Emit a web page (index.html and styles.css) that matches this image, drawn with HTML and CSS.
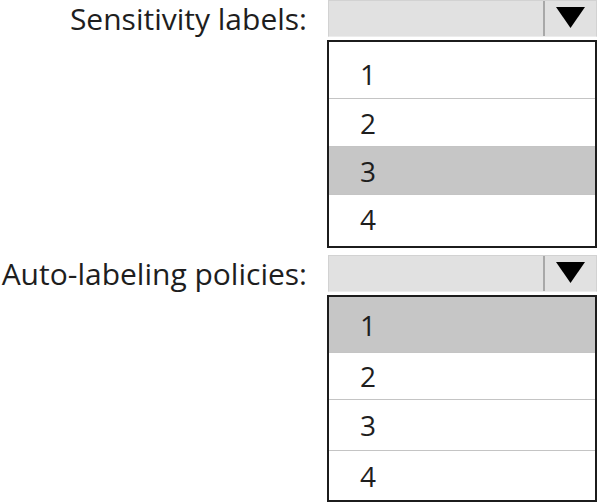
FILE: index.html
```html
<!DOCTYPE html>
<html lang="en">
<head>
  <meta charset="UTF-8">
  <title>Labels</title>
  <link rel="stylesheet" href="styles.css">
</head>
<body>

<div class="group group-a">
  <div class="label">Sensitivity labels:</div>
  <div class="combo">
    <span class="combo-value"></span>
    <span class="combo-btn"><svg width="29" height="21" viewBox="0 0 29 21"><polygon points="0,0 29,0 14.5,21" fill="#000"/></svg></span>
  </div>
  <div class="list">
    <div class="item">1</div>
    <div class="item">2</div>
    <div class="item selected">3</div>
    <div class="item">4</div>
  </div>
</div>

<div class="group group-b">
  <div class="label">Auto-labeling policies:</div>
  <div class="combo">
    <span class="combo-value"></span>
    <span class="combo-btn"><svg width="29" height="21" viewBox="0 0 29 21"><polygon points="0,0 29,0 14.5,21" fill="#000"/></svg></span>
  </div>
  <div class="list">
    <div class="item selected">1</div>
    <div class="item">2</div>
    <div class="item">3</div>
    <div class="item">4</div>
  </div>
</div>

</body>
</html>
```

FILE: styles.css
```css
html, body {
  margin: 0;
  padding: 0;
  background: #fff;
  font-family: 'Open Sans', 'Noto Sans', sans-serif;
  color: #1e1e1e;
}

.group {
  display: grid;
  grid-template-columns: 327px 270px;
  grid-template-rows: 37px auto;
  row-gap: 3px;
}

.group-b {
  margin-top: 7px;
}

.label {
  grid-column: 1;
  grid-row: 1;
  justify-self: end;
  padding-right: 20px;
  font-size: 30px;
  line-height: 37px;
  white-space: nowrap;
}

.combo {
  grid-column: 2;
  grid-row: 1;
  display: flex;
  height: 37px;
  box-sizing: border-box;
  margin-left: 1px;
  background: #e1e1e1;
  border: 1px solid #d2d2d2;
  border-bottom-color: #ececec;
}

.combo-value {
  flex: 1;
}

.combo-btn {
  width: 51px;
  display: flex;
  align-items: center;
  justify-content: center;
  border-left: 2px solid #a8a8a8;
  padding-bottom: 2px;
}

.list {
  grid-column: 2;
  grid-row: 2;
  border: 2px solid #1c1c1c;
  padding: 8px 0 4px;
}

.item {
  height: 48px;
  box-sizing: border-box;
  display: flex;
  align-items: center;
  padding-left: 31px;
  font-size: 28px;
  border-top: 1px solid #c4c4c4;
}

.item:first-child {
  border-top: none;
}

.item.selected {
  background: #c6c6c6;
}

.group-b .list {
  padding-top: 0;
  padding-bottom: 0;
}

.group-b .item:first-child {
  height: 55px;
}

.group-b .item:nth-child(2) {
  height: 47px;
}

.group-b .item:nth-child(3) {
  height: 51px;
}

.group-b .item:nth-child(4) {
  height: 50px;
}
```
